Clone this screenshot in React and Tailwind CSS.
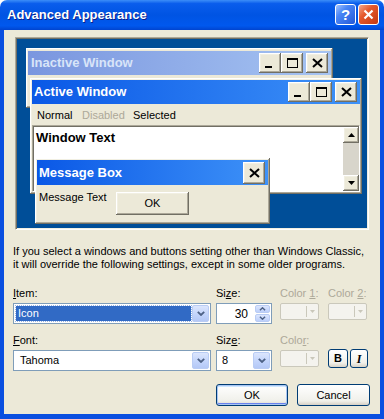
import React from "react";

const raised =
  "shadow-[inset_-1px_-1px_0_#716F64,inset_1px_1px_0_#FFFFFF,inset_-2px_-2px_0_#ACA899,inset_2px_2px_0_#F1EFE2]";

function CapBtn({ kind, extra = "" }) {
  return (
    <div className={`w-[22px] h-[20px] bg-[#ECE9D8] flex items-center justify-center ${raised} ${extra}`}>
      {kind === "min" && <div className="w-[7px] h-[2px] bg-black mt-[8px] mr-[4px]" />}
      {kind === "max" && <div className="w-[11px] h-[10px] border border-black border-t-2" />}
      {kind === "close" && (
        <svg width="11" height="10" viewBox="0 0 11 10">
          <path d="M1 1L10 9M10 1L1 9" stroke="#000" strokeWidth="2" />
        </svg>
      )}
    </div>
  );
}

function ScrollArrow({ up }) {
  return (
    <div className={`w-[16px] h-[16px] bg-[#ECE9D8] flex items-center justify-center ${raised}`}>
      <svg width="7" height="4" viewBox="0 0 7 4">
        {up ? <path d="M3.5 0L7 4H0Z" fill="#000" /> : <path d="M0 0H7L3.5 4Z" fill="#000" />}
      </svg>
    </div>
  );
}

function Chevron({ down = true, w = 8, h = 5 }) {
  return (
    <svg width={w} height={h} viewBox="0 0 8 5">
      <path
        d={down ? "M0.8 0.8L4 4L7.2 0.8" : "M0.8 4.2L4 1L7.2 4.2"}
        stroke="#4D6185"
        strokeWidth="1.8"
        fill="none"
      />
    </svg>
  );
}

function DropBtn() {
  return (
    <div className="w-[17px] h-[17px] rounded-[2px] border border-[#B9CCF4] bg-[linear-gradient(to_bottom,#DCE6FD,#C1D3FB_60%,#B4C8F6)] flex items-center justify-center">
      <Chevron />
    </div>
  );
}

function ColorBtn() {
  return (
    <div className="mt-[2px] h-[17px] w-full rounded-[2px] border border-[#CAC8BB] bg-[#F4F3EE] flex items-center justify-end">
      <div className="w-[1px] h-[11px] bg-[#CAC8BB]" />
      <svg width="5" height="3" viewBox="0 0 5 3" className="mx-[3px]">
        <path d="M0 0H5L2.5 3Z" fill="#C9C7BA" />
      </svg>
    </div>
  );
}

function Label({ children, disabled }) {
  return (
    <div className={`h-[13px] leading-[13px] mb-[3px] whitespace-nowrap ${disabled ? "text-[#ACA899]" : "text-black"}`}>
      {children}
    </div>
  );
}

export default function App() {
  return (
    <div className="w-[384px] h-[419px] flex flex-col font-['Liberation_Sans',Arial,sans-serif] text-[11px] text-black bg-white">
      {/* title bar */}
      <div className="h-[30px] shrink-0 rounded-t-[7px] bg-[linear-gradient(to_bottom,#3C8EF8_0%,#0A5DEC_12%,#0054E3_50%,#0058EE_86%,#0044CF_100%)] flex items-center pl-[7px] pr-[5px]">
        <span className="text-[13px] font-bold text-white [text-shadow:1px_1px_0_#0A1F8A]">
          Advanced Appearance
        </span>
        <div className="ml-auto flex gap-[2px] -mt-[1px]">
          <div className="w-[21px] h-[21px] rounded-[3px] border border-white bg-[linear-gradient(135deg,#A3C4FF_0%,#4A86F6_35%,#2258D8_100%)] flex items-center justify-center text-white font-bold text-[15px] leading-none">
            ?
          </div>
          <div className="w-[21px] h-[21px] rounded-[3px] border border-white bg-[linear-gradient(135deg,#F4A98E_0%,#E5592C_38%,#C33810_100%)] flex items-center justify-center">
            <svg width="11" height="11" viewBox="0 0 11 11">
              <path d="M1.5 1.5L9.5 9.5M9.5 1.5L1.5 9.5" stroke="#fff" strokeWidth="2.2" />
            </svg>
          </div>
        </div>
      </div>

      {/* body */}
      <div className="flex-1 bg-[#ECE9D8] border-l-4 border-r-4 border-b-[5px] border-[#0A4FE0] pl-[9px] flex flex-col">
        {/* preview */}
        <div className="mt-[7px] ml-[2px] w-[354px] h-[193px] border border-t-[#ACA899] border-l-[#ACA899] border-r-white border-b-white shadow-[inset_1px_1px_0_#716F64,inset_-1px_-1px_0_#F1EFE2] p-[1px]">
          <div className="relative w-full h-full bg-[#004E98] overflow-hidden">
            {/* inactive window */}
            <div className={`absolute left-[9px] top-[9px] w-[307px] h-[60px] bg-[#ECE9D8] px-[2px] pt-[3px] ${raised}`}>
              <div className="h-[24px] flex items-center bg-[linear-gradient(to_right,#7A96DF,#A6C4F2)] pl-[3px] pr-[3px]">
                <span className="text-[13px] font-bold text-[#D8E4F8]">Inactive Window</span>
                <div className="ml-auto flex">
                  <CapBtn kind="min" />
                  <CapBtn kind="max" />
                  <CapBtn kind="close" extra="ml-[3px]" />
                </div>
              </div>
            </div>

            {/* active window */}
            <div className={`absolute left-[13px] top-[39px] w-[332px] h-[116px] bg-[#ECE9D8] p-[2px] flex flex-col ${raised}`}>
              <div className="h-[24px] shrink-0 flex items-center bg-[linear-gradient(to_right,#0A58E6,#3E92F8)] pl-[2px] pr-[3px]">
                <span className="text-[13px] font-bold text-white">Active Window</span>
                <div className="ml-auto flex">
                  <CapBtn kind="min" />
                  <CapBtn kind="max" />
                  <CapBtn kind="close" extra="ml-[3px]" />
                </div>
              </div>
              <div className="h-[21px] shrink-0 flex items-center pl-[5px] pt-[2px]">
                <span className="w-[45px]">Normal</span>
                <span className="w-[51px] text-[#ACA899]">Disabled</span>
                <span>Selected</span>
              </div>
              <div className="flex-1 flex border border-t-[#ACA899] border-l-[#ACA899] border-r-white border-b-white shadow-[inset_1px_1px_0_#716F64] bg-white pl-[1px] pt-[1px]">
                <div className="flex-1 text-[13px] font-bold pl-[2px] pt-[3px] leading-[16px]">Window Text</div>
                <div className="w-[16px] flex flex-col">
                  <ScrollArrow up />
                  <div className="flex-1 bg-[#D8D5CB]" />
                  <ScrollArrow />
                </div>
              </div>
            </div>

            {/* message box */}
            <div className={`absolute left-[18px] top-[119px] w-[235px] h-[66px] bg-[#ECE9D8] p-[2px] flex flex-col ${raised}`}>
              <div className="h-[25px] shrink-0 flex items-center bg-[linear-gradient(to_right,#0A58E6,#3E92F8)] pl-[2px] pr-[3px]">
                <span className="text-[13px] font-bold text-white">Message Box</span>
                <div className="ml-auto flex">
                  <CapBtn kind="close" extra="!h-[22px]" />
                </div>
              </div>
              <div className="flex items-start pl-[2px]">
                <span className="w-[77px] mt-[6px] leading-[13px] whitespace-nowrap">Message Text</span>
                <div className={`w-[73px] h-[23px] mt-[7px] bg-[#ECE9D8] flex items-center justify-center text-[11px] ${raised}`}>
                  OK
                </div>
              </div>
            </div>
          </div>
        </div>

        {/* description */}
        <p className="mt-[15px] leading-[13px] whitespace-nowrap">
          If you select a windows and buttons setting other than Windows Classic,
          <br />
          it will override the following settings, except in some older programs.
        </p>

        {/* row 1 */}
        <div className="mt-[16px] flex">
          <div className="w-[198px]">
            <Label>
              <span className="underline">I</span>tem:
            </Label>
            <div className="h-[21px] border border-[#7F9DB9] bg-white flex items-center pl-[2px] pr-[1px]">
              <div className="flex-1 h-[15px] bg-[#316AC5] text-white leading-[15px] pl-[2px] mr-[1px] outline-1 outline-dotted outline-[#9BB5E0]">
                Icon
              </div>
              <DropBtn />
            </div>
          </div>
          <div className="w-[56px] ml-[5px]">
            <Label>
              Si<span className="underline">z</span>e:
            </Label>
            <div className="h-[21px] border border-[#7F9DB9] bg-white flex items-center pr-[1px]">
              <span className="flex-1 text-right pr-[7px] text-[12px]">30</span>
              <div className="w-[15px] h-[17px] flex flex-col gap-[1px]">
                <div className="flex-1 rounded-[2px] border border-[#B9CCF4] bg-[linear-gradient(to_bottom,#DCE6FD,#BCCFFA)] flex items-center justify-center">
                  <Chevron down={false} w={7} h={4} />
                </div>
                <div className="flex-1 rounded-[2px] border border-[#B9CCF4] bg-[linear-gradient(to_bottom,#DCE6FD,#BCCFFA)] flex items-center justify-center">
                  <Chevron w={7} h={4} />
                </div>
              </div>
            </div>
          </div>
          <div className="w-[39px] ml-[8px]">
            <Label disabled>
              Color <span className="underline">1</span>:
            </Label>
            <ColorBtn />
          </div>
          <div className="w-[39px] ml-[9px]">
            <Label disabled>
              Color <span className="underline">2</span>:
            </Label>
            <ColorBtn />
          </div>
        </div>

        {/* row 2 */}
        <div className="mt-[10px] flex">
          <div className="w-[198px]">
            <Label>
              <span className="underline">F</span>ont:
            </Label>
            <div className="h-[21px] border border-[#7F9DB9] bg-white flex items-center pl-[6px] pr-[1px]">
              <span className="flex-1">Tahoma</span>
              <DropBtn />
            </div>
          </div>
          <div className="w-[56px] ml-[5px]">
            <Label>
              Siz<span className="underline">e</span>:
            </Label>
            <div className="h-[21px] border border-[#7F9DB9] bg-white flex items-center pl-[5px] pr-[1px]">
              <span className="flex-1">8</span>
              <DropBtn />
            </div>
          </div>
          <div className="w-[39px] ml-[8px]">
            <Label disabled>
              Colo<span className="underline">r</span>:
            </Label>
            <ColorBtn />
          </div>
          <div className="ml-[9px] pt-[15px] flex gap-[2px]">
            <div className="w-[20px] h-[19px] rounded-[3px] border border-[#003C74] bg-[linear-gradient(to_bottom,#FFFFFF,#F0F0EA_75%,#D8D2C6)] flex items-center justify-center font-bold text-[11px]">
              B
            </div>
            <div className="w-[18px] h-[19px] rounded-[3px] border border-[#003C74] bg-[linear-gradient(to_bottom,#FFFFFF,#F0F0EA_75%,#D8D2C6)] flex items-center justify-center font-bold italic text-[12px] font-['Liberation_Serif',serif]">
              I
            </div>
          </div>
        </div>

        {/* buttons */}
        <div className="mt-[13px] flex ml-[203px] gap-[9px]">
          <div className="w-[72px] h-[22px] rounded-[3px] border border-[#003C74] bg-[linear-gradient(to_bottom,#FFFFFF,#F0F0EA_80%,#DCD7CB)] shadow-[inset_0_0_0_1px_#A9C6F3,inset_0_-2px_0_#6982EE,inset_0_2px_0_#CEE7FF] flex items-center justify-center">
            OK
          </div>
          <div className="w-[73px] h-[22px] rounded-[3px] border border-[#003C74] bg-[linear-gradient(to_bottom,#FFFFFF,#F0F0EA_80%,#D6D0C5)] flex items-center justify-center">
            Cancel
          </div>
        </div>
      </div>
    </div>
  );
}
